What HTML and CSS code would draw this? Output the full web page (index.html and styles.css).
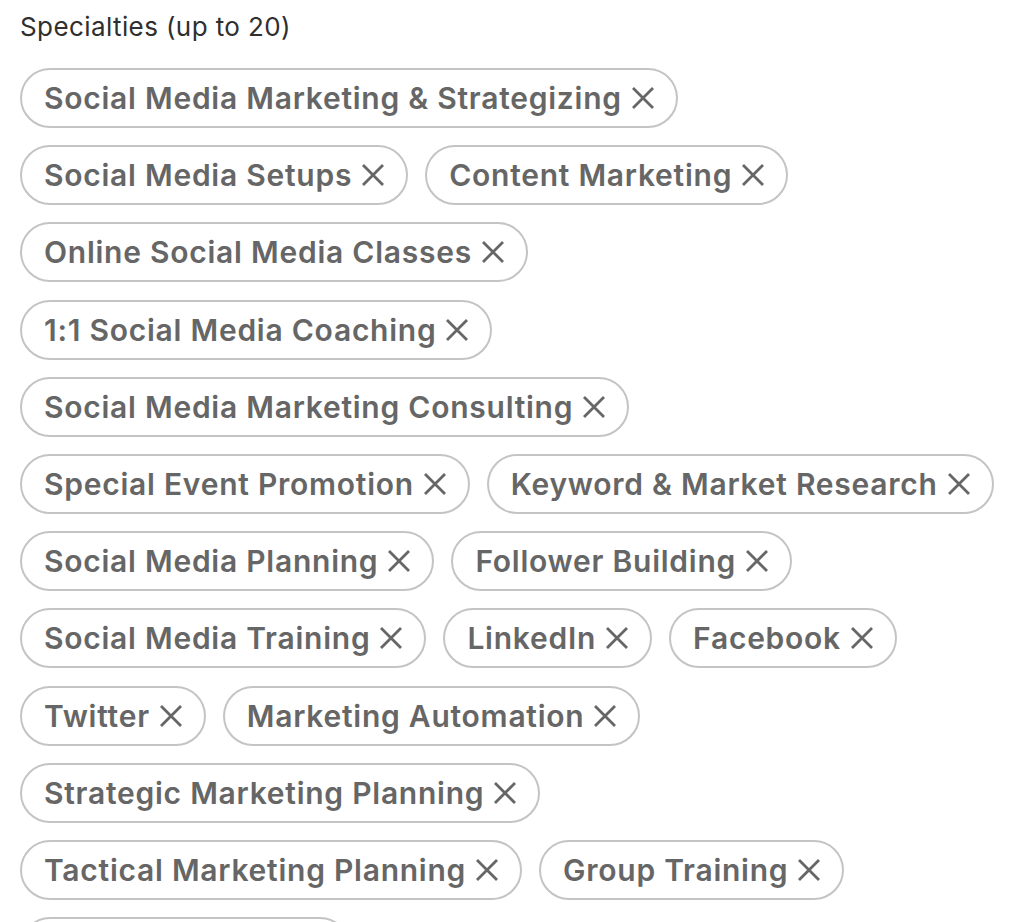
FILE: index.html
```html
<!DOCTYPE html>
<html>
<head>
  <meta charset="UTF-8">
  <title>Specialties</title>
  <link rel="stylesheet" href="styles.css">
</head>
<body>
  <div class="field">
    <label class="field-label">Specialties (up to 20)</label>

    <ul class="pills">
      <li class="pill">Social Media Marketing &amp; Strategizing <svg class="x" viewBox="0 0 24 24"><path d="M2 2L22 22M22 2L2 22"/></svg></li>
      <li class="pill">Social Media Setups <svg class="x" viewBox="0 0 24 24"><path d="M2 2L22 22M22 2L2 22"/></svg></li>
      <li class="pill">Content Marketing <svg class="x" viewBox="0 0 24 24"><path d="M2 2L22 22M22 2L2 22"/></svg></li>
      <li class="pill">Online Social Media Classes <svg class="x" viewBox="0 0 24 24"><path d="M2 2L22 22M22 2L2 22"/></svg></li>
      <li class="pill">1:1 Social Media Coaching <svg class="x" viewBox="0 0 24 24"><path d="M2 2L22 22M22 2L2 22"/></svg></li>
      <li class="pill">Social Media Marketing Consulting <svg class="x" viewBox="0 0 24 24"><path d="M2 2L22 22M22 2L2 22"/></svg></li>
      <li class="pill">Special Event Promotion <svg class="x" viewBox="0 0 24 24"><path d="M2 2L22 22M22 2L2 22"/></svg></li>
      <li class="pill">Keyword &amp; Market Research <svg class="x" viewBox="0 0 24 24"><path d="M2 2L22 22M22 2L2 22"/></svg></li>
      <li class="pill">Social Media Planning <svg class="x" viewBox="0 0 24 24"><path d="M2 2L22 22M22 2L2 22"/></svg></li>
      <li class="pill">Follower Building <svg class="x" viewBox="0 0 24 24"><path d="M2 2L22 22M22 2L2 22"/></svg></li>
      <li class="pill">Social Media Training <svg class="x" viewBox="0 0 24 24"><path d="M2 2L22 22M22 2L2 22"/></svg></li>
      <li class="pill">LinkedIn <svg class="x" viewBox="0 0 24 24"><path d="M2 2L22 22M22 2L2 22"/></svg></li>
      <li class="pill">Facebook <svg class="x" viewBox="0 0 24 24"><path d="M2 2L22 22M22 2L2 22"/></svg></li>
      <li class="pill">Twitter <svg class="x" viewBox="0 0 24 24"><path d="M2 2L22 22M22 2L2 22"/></svg></li>
      <li class="pill">Marketing Automation <svg class="x" viewBox="0 0 24 24"><path d="M2 2L22 22M22 2L2 22"/></svg></li>
      <li class="pill">Strategic Marketing Planning <svg class="x" viewBox="0 0 24 24"><path d="M2 2L22 22M22 2L2 22"/></svg></li>
      <li class="pill">Tactical Marketing Planning <svg class="x" viewBox="0 0 24 24"><path d="M2 2L22 22M22 2L2 22"/></svg></li>
      <li class="pill">Group Training <svg class="x" viewBox="0 0 24 24"><path d="M2 2L22 22M22 2L2 22"/></svg></li>
      <li class="pill">Video Marketing <svg class="x" viewBox="0 0 24 24"><path d="M2 2L22 22M22 2L2 22"/></svg></li>
    </ul>
  </div>
</body>
</html>
```

FILE: styles.css
```css
body {
  margin: 0;
  background: #fff;
  font-family: Inter, "Liberation Sans", sans-serif;
}
.field {
  padding: 9px 20px 0 20px;
}
.field-label {
  display: block;
  font-size: 26px;
  line-height: 36px;
  letter-spacing: 0.4px;
  color: #2f2f2f;
  margin-bottom: 23px;
}
.pills {
  list-style: none;
  margin: 0;
  padding: 0;
  display: flex;
  flex-wrap: wrap;
  gap: 17.2px 17px;
}
.pill {
  box-sizing: border-box;
  height: 60px;
  display: flex;
  align-items: center;
  padding: 0 21px 0 22px;
  border: 2px solid #c4c4c4;
  border-radius: 30px;
  font-size: 30px;
  font-weight: 600;
  letter-spacing: 0.75px;
  color: #666;
  white-space: nowrap;
}
.x {
  width: 24px;
  height: 24px;
  margin-left: 9px;
  fill: none;
  stroke: #666;
  stroke-width: 2.8;
}
```
